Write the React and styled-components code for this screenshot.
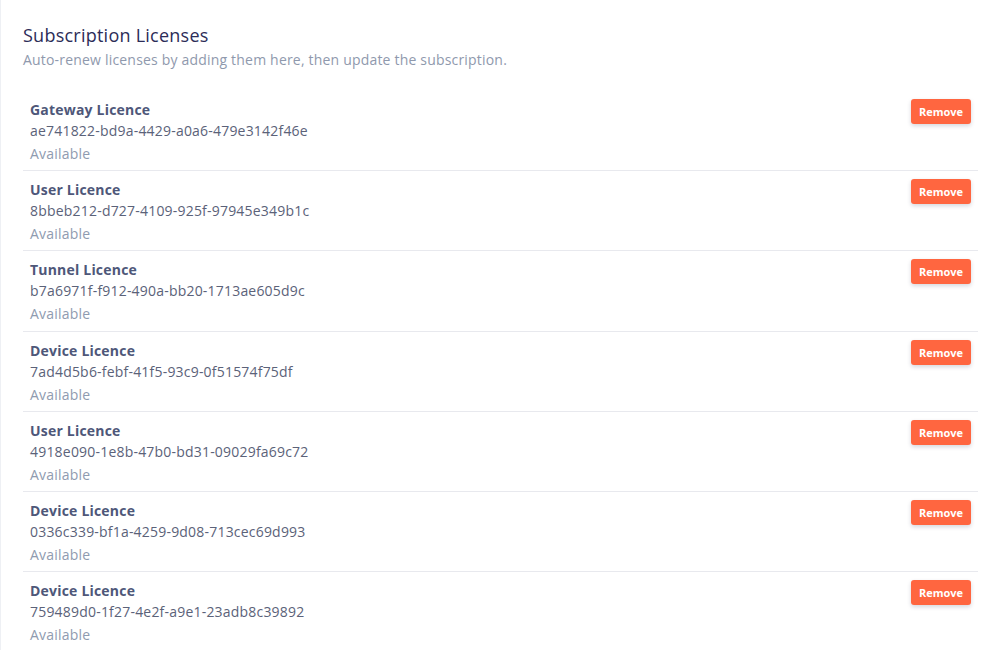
import React from "react";
import styled, { createGlobalStyle } from "styled-components";

const Global = createGlobalStyle`
  html, body { margin: 0; padding: 0; background: #ffffff; }
  body { font-family: "Open Sans", "Noto Sans", sans-serif; }
`;

const Panel = styled.div`
  box-sizing: border-box;
  width: 1000px;
  height: 650px;
  overflow: hidden;
  border-left: 1px solid #eef0f4;
  padding: 23px 22px 0 22px;
  background: #fff;
`;

const Title = styled.h2`
  margin: 0;
  font-size: 18px;
  line-height: 24px;
  font-weight: 400;
  letter-spacing: 0.24px;
  color: #2c2c58;
`;

const Subtitle = styled.p`
  margin: 3px 0 0 0;
  font-size: 14px;
  line-height: 20px;
  letter-spacing: 0.19px;
  color: #8f99ad;
`;

const List = styled.ul`
  list-style: none;
  margin: 21px 0 0 0;
  padding: 0;
`;

const Row = styled.li`
  box-sizing: border-box;
  display: flex;
  justify-content: space-between;
  align-items: flex-start;
  height: 80.2px;
  padding: 8px 7px 0 7px;
  border-bottom: 1px solid ${(p) => (p.$last ? "transparent" : "#e8e9ee")};
`;

const Info = styled.div`
  display: flex;
  flex-direction: column;
  font-size: 14px;
  letter-spacing: 0.2px;
`;

const Name = styled.div`
  line-height: 21px;
  font-weight: 700;
  color: #4e5779;
`;

const Key = styled.div`
  line-height: 21px;
  color: #5b6279;
`;

const Status = styled.div`
  margin-top: 2px;
  line-height: 22px;
  color: #8f9bb0;
`;

const RemoveButton = styled.button`
  box-sizing: border-box;
  width: 60px;
  height: 25px;
  border: none;
  border-radius: 3px;
  background: #ff6640;
  color: #ffffff;
  font-family: "Open Sans", "Noto Sans", sans-serif;
  font-size: 11px;
  font-weight: 700;
  padding: 0;
  cursor: pointer;
  box-shadow: 0 2px 4px rgba(30, 40, 70, 0.18);
`;

const licences = [
  ["Gateway Licence", "ae741822-bd9a-4429-a0a6-479e3142f46e"],
  ["User Licence", "8bbeb212-d727-4109-925f-97945e349b1c"],
  ["Tunnel Licence", "b7a6971f-f912-490a-bb20-1713ae605d9c"],
  ["Device Licence", "7ad4d5b6-febf-41f5-93c9-0f51574f75df"],
  ["User Licence", "4918e090-1e8b-47b0-bd31-09029fa69c72"],
  ["Device Licence", "0336c339-bf1a-4259-9d08-713cec69d993"],
  ["Device Licence", "759489d0-1f27-4e2f-a9e1-23adb8c39892"],
];

export default function App() {
  return (
    <>
      <Global />
      <Panel>
        <Title>Subscription Licenses</Title>
        <Subtitle>Auto-renew licenses by adding them here, then update the subscription.</Subtitle>
        <List>
          {licences.map(([name, key], i) => (
            <Row key={key} $last={i === licences.length - 1}>
              <Info>
                <Name>{name}</Name>
                <Key>{key}</Key>
                <Status>Available</Status>
              </Info>
              <RemoveButton>Remove</RemoveButton>
            </Row>
          ))}
        </List>
      </Panel>
    </>
  );
}
